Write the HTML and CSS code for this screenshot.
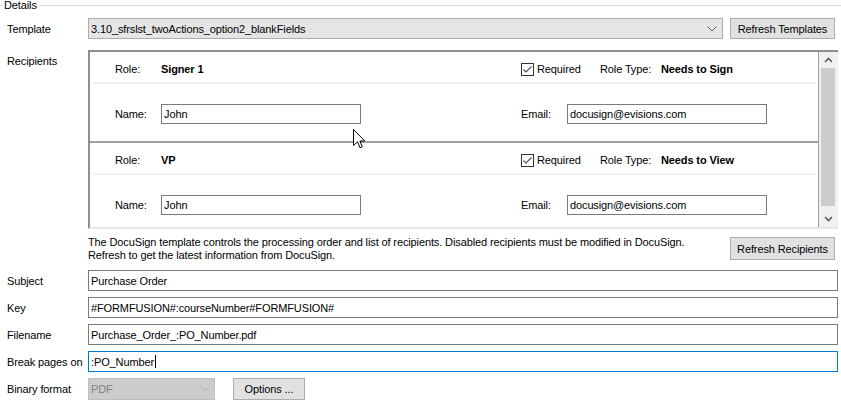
FILE: index.html
```html
<!DOCTYPE html>
<html>
<head>
<meta charset="utf-8">
<link rel="stylesheet" href="styles.css">
</head>
<body>
<div class="details">
  <div class="legend"><span class="legend-text">Details</span></div>

  <div class="row row-template">
    <div class="label">Template</div>
    <div class="field">
      <div class="combo">
        <span class="combo-text">3.10_sfrslst_twoActions_option2_blankFields</span>
        <svg class="combo-arrow" width="10" height="6" viewBox="0 0 10 6"><path d="M0.5 0.5 L5 5 L9.5 0.5" fill="none" stroke="#606060" stroke-width="1"/></svg>
      </div>
      <button class="btn btn-templates">Refresh Templates</button>
    </div>
  </div>

  <div class="row row-recipients">
    <div class="label label-top">Recipients</div>
    <div class="panel">
      <div class="list">
        <div class="recipient">
          <div class="role-row">
            <span class="col-label">Role:</span>
            <span class="col-value bold">Signer 1</span>
            <span class="check"><svg width="13" height="13" viewBox="0 0 13 13"><rect x="0.5" y="0.5" width="12" height="12" fill="#fff" stroke="#333"/><path d="M2.5 6.5 L5 9 L10.5 3.5" fill="none" stroke="#555" stroke-width="1.2"/></svg></span>
            <span class="req">Required</span>
            <span class="roletype">Role Type:</span>
            <span class="bold">Needs to Sign</span>
          </div>
          <div class="sep"></div>
          <div class="name-row">
            <span class="col-label">Name:</span>
            <span class="col-value"><span class="input small">John</span></span>
            <span class="col-label">Email:</span>
            <span class="input small">docusign@evisions.com</span>
          </div>
        </div>
        <div class="divider"></div>
        <div class="recipient">
          <div class="role-row">
            <span class="col-label">Role:</span>
            <span class="col-value bold">VP</span>
            <span class="check"><svg width="13" height="13" viewBox="0 0 13 13"><rect x="0.5" y="0.5" width="12" height="12" fill="#fff" stroke="#333"/><path d="M2.5 6.5 L5 9 L10.5 3.5" fill="none" stroke="#555" stroke-width="1.2"/></svg></span>
            <span class="req">Required</span>
            <span class="roletype">Role Type:</span>
            <span class="bold">Needs to View</span>
          </div>
          <div class="sep"></div>
          <div class="name-row">
            <span class="col-label">Name:</span>
            <span class="col-value"><span class="input small">John</span></span>
            <span class="col-label">Email:</span>
            <span class="input small">docusign@evisions.com</span>
          </div>
        </div>
      </div>
      <div class="scrollbar">
        <div class="sb-btn sb-up"><svg width="9" height="6" viewBox="0 0 9 6"><path d="M1 5 L4.5 1.5 L8 5" fill="none" stroke="#606060" stroke-width="1.6"/></svg></div>
        <div class="sb-thumb"></div>
        <div class="sb-space"></div>
        <div class="sb-btn sb-down"><svg width="9" height="6" viewBox="0 0 9 6"><path d="M1 1 L4.5 4.5 L8 1" fill="none" stroke="#606060" stroke-width="1.6"/></svg></div>
      </div>
    </div>
  </div>

  <div class="row row-info">
    <div class="label"></div>
    <div class="info-text">The DocuSign template controls the processing order and list of recipients. Disabled recipients must be modified in DocuSign.<br>Refresh to get the latest information from DocuSign.</div>
    <button class="btn btn-recipients">Refresh Recipients</button>
  </div>

  <div class="row row-form first">
    <div class="label">Subject</div>
    <div class="input wide">Purchase Order</div>
  </div>
  <div class="row row-form">
    <div class="label">Key</div>
    <div class="input wide">#FORMFUSION#:courseNumber#FORMFUSION#</div>
  </div>
  <div class="row row-form">
    <div class="label">Filename</div>
    <div class="input wide">Purchase_Order_:PO_Number.pdf</div>
  </div>
  <div class="row row-form">
    <div class="label">Break pages on</div>
    <div class="input wide focused">:PO_Number<span class="caret"></span></div>
  </div>
  <div class="row row-form row-binary">
    <div class="label">Binary format</div>
    <div class="select-disabled">
      <span>PDF</span>
      <svg width="10" height="6" viewBox="0 0 10 6"><path d="M0.5 0.5 L5 5 L9.5 0.5" fill="none" stroke="#b4b4b4" stroke-width="1"/></svg>
    </div>
    <button class="btn btn-options">Options ...</button>
  </div>
</div>

<svg class="cursor" width="13" height="20" viewBox="0 0 13 20"><path d="M0.5 0.5 L0.5 16.5 L4.5 12.8 L7 18.8 L9.3 17.8 L6.9 12 L11.8 12 Z" fill="#fff" stroke="#000" stroke-width="1" stroke-linejoin="miter"/></svg>
</body>
</html>
```

FILE: styles.css
```css
* { box-sizing: border-box; }

html, body {
  margin: 0;
  padding: 0;
  background: #ffffff;
}

body {
  position: relative;
  width: 841px;
  height: 407px;
  overflow: hidden;
  font-family: "Liberation Sans", Arial, sans-serif;
  font-size: 11px;
  letter-spacing: -0.12px;
  color: #000;
}

.details {
  display: flex;
  flex-direction: column;
}

.legend {
  display: flex;
  align-items: center;
  height: 10px;
}
.legend::before {
  content: "";
  width: 3px;
  height: 1px;
  background: #dcdcdc;
  margin-right: 1px;
}
.legend::after {
  content: "";
  flex: 1;
  height: 1px;
  background: #dcdcdc;
  margin-left: 2px;
}
.legend-text {
  line-height: 10px;
}

.row {
  display: flex;
  align-items: center;
}

.label {
  width: 88px;
  flex: none;
  padding-left: 7px;
  white-space: nowrap;
}
.label-top {
  align-self: flex-start;
  padding-top: 5px;
}

/* Template row */
.row-template {
  margin-top: 8px;
  height: 21px;
}
.field {
  flex: 1;
  display: flex;
  align-items: center;
  height: 21px;
}
.combo {
  flex: 1;
  height: 21px;
  background: #e5e5e5;
  border: 1px solid #adadad;
  display: flex;
  align-items: center;
  padding-left: 2px;
  padding-right: 5px;
}
.combo-text { flex: 1; }
.combo-arrow { flex: none; }

.btn {
  font-family: inherit;
  font-size: 11px;
  letter-spacing: -0.12px;
  color: #000;
  background: #e1e1e1;
  border: 1px solid #adadad;
  padding: 0;
  margin: 0;
  text-align: center;
}
.btn-templates {
  width: 105px;
  height: 21px;
  margin-left: 7px;
  margin-right: 6px;
}

/* Recipients */
.row-recipients {
  margin-top: 11px;
  align-items: flex-start;
}
.panel {
  flex: 1;
  margin-right: 3px;
  height: 179px;
  border-top: 2px solid #8e8e8e;
  border-left: 2px solid #8e8e8e;
  border-bottom: 2px solid #e6e6e6;
  display: flex;
  overflow: hidden;
}
.list {
  flex: 1;
  overflow: hidden;
}
.recipient {
  padding-bottom: 17px;
}
.role-row {
  display: flex;
  align-items: center;
  height: 30px;
  padding-top: 4px;
  padding-left: 25px;
}
.col-label {
  width: 46px;
  flex: none;
}
.col-value {
  width: 360px;
  flex: none;
}
.bold { font-weight: bold; }
.check {
  width: 13px;
  height: 13px;
  display: flex;
  margin-right: 3px;
}
.req { width: 63px; }
.roletype { width: 61px; }

.sep {
  height: 2px;
  background: #f0f0f0;
  margin: 0 2px 0 3px;
}
.name-row {
  display: flex;
  align-items: center;
  margin-top: 20px;
  padding-left: 25px;
  height: 20px;
}
.input {
  display: flex;
  align-items: center;
  border: 1px solid #7a7a7a;
  background: #fff;
  padding: 0 2px;
  white-space: nowrap;
}
.input.small {
  width: 200px;
  height: 20px;
}
.divider {
  height: 2px;
  background: #a0a0a0;
}

.scrollbar {
  width: 20px;
  flex: none;
  background: #f0f0f0;
  border-left: 1px solid #a0a0a0;
  display: flex;
  flex-direction: column;
}
.sb-btn {
  height: 16px;
  display: flex;
  align-items: center;
  justify-content: center;
  flex: none;
}
.sb-thumb {
  height: 138px;
  background: #cdcdcd;
  margin: 0 3px 0 2px;
  flex: none;
}
.sb-space { flex: 1; }
.sb-down { height: 17px; }

/* Info */
.row-info {
  margin-top: 7px;
  align-items: flex-start;
}
.info-text {
  flex: 1;
  line-height: 13px;
}
.btn-recipients {
  width: 105px;
  height: 23px;
  margin-top: 1px;
  margin-right: 6px;
}

/* Form rows */
.row-form {
  margin-top: 6px;
  height: 21px;
}
.row-form.first { margin-top: 8px; }
.input.wide {
  flex: 1;
  height: 21px;
  margin-right: 3px;
}
.input.focused {
  border-color: #0078d7;
}
.caret {
  display: inline-block;
  width: 1px;
  height: 13px;
  background: #000;
  margin-left: 1px;
}

.row-binary { height: 22px; }
.select-disabled {
  width: 127px;
  height: 22px;
  background: #cccccc;
  border: 1px solid #bfbfbf;
  color: #838383;
  display: flex;
  align-items: center;
  justify-content: space-between;
  padding: 0 4px 0 2px;
}
.btn-options {
  width: 72px;
  height: 22px;
  margin-left: 18px;
}

.cursor {
  position: absolute;
  left: 353px;
  top: 129px;
}
```
